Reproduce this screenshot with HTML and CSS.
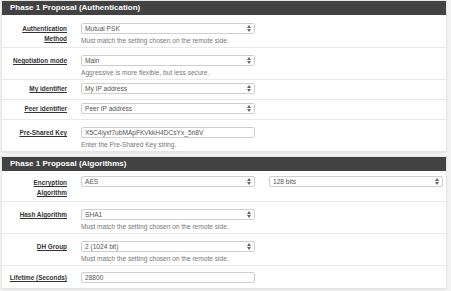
FILE: index.html
```html
<!DOCTYPE html>
<html lang="en">
<head>
    <meta charset="UTF-8">
    <title>IPsec Phase 1</title>
    <link rel="stylesheet" href="styles.css">
</head>
<body>
    <!-- Phase 1: Authentication -->
    <div class="panel">
        <div class="panel-heading">Phase 1 Proposal (Authentication)</div>

        <div class="row has-hint">
            <div class="label"><span>Authentication Method</span></div>
            <div class="field">
                <div class="select"><span>Mutual PSK</span><svg class="arrows" width="4" height="7" viewBox="0 0 4 7"><path d="M0 3L2 0L4 3Z M0 4L2 7L4 4Z"/></svg></div>
                <div class="hint">Must match the setting chosen on the remote side.</div>
            </div>
        </div>

        <div class="row has-hint">
            <div class="label"><span>Negotiation mode</span></div>
            <div class="field">
                <div class="select"><span>Main</span><svg class="arrows" width="4" height="7" viewBox="0 0 4 7"><path d="M0 3L2 0L4 3Z M0 4L2 7L4 4Z"/></svg></div>
                <div class="hint">Aggressive is more flexible, but less secure.</div>
            </div>
        </div>

        <div class="row">
            <div class="label"><span>My identifier</span></div>
            <div class="field">
                <div class="select"><span>My IP address</span><svg class="arrows" width="4" height="7" viewBox="0 0 4 7"><path d="M0 3L2 0L4 3Z M0 4L2 7L4 4Z"/></svg></div>
            </div>
        </div>

        <div class="row">
            <div class="label"><span>Peer identifier</span></div>
            <div class="field">
                <div class="select"><span>Peer IP address</span><svg class="arrows" width="4" height="7" viewBox="0 0 4 7"><path d="M0 3L2 0L4 3Z M0 4L2 7L4 4Z"/></svg></div>
            </div>
        </div>

        <div class="row has-hint">
            <div class="label"><span>Pre-Shared Key</span></div>
            <div class="field">
                <div class="input">X5C4iyxf7ubMApFKVkkH4DCsYx_5n8V</div>
                <div class="hint">Enter the Pre-Shared Key string.</div>
            </div>
        </div>
    </div>

    <!-- Phase 1: Algorithms -->
    <div class="panel">
        <div class="panel-heading">Phase 1 Proposal (Algorithms)</div>

        <div class="row two-line">
            <div class="label"><span>Encryption Algorithm</span></div>
            <div class="field">
                <div class="select"><span>AES</span><svg class="arrows" width="4" height="7" viewBox="0 0 4 7"><path d="M0 3L2 0L4 3Z M0 4L2 7L4 4Z"/></svg></div>
            </div>
            <div class="field field-extra">
                <div class="select"><span>128 bits</span><svg class="arrows" width="4" height="7" viewBox="0 0 4 7"><path d="M0 3L2 0L4 3Z M0 4L2 7L4 4Z"/></svg></div>
            </div>
        </div>

        <div class="row has-hint">
            <div class="label"><span>Hash Algorithm</span></div>
            <div class="field">
                <div class="select"><span>SHA1</span><svg class="arrows" width="4" height="7" viewBox="0 0 4 7"><path d="M0 3L2 0L4 3Z M0 4L2 7L4 4Z"/></svg></div>
                <div class="hint">Must match the setting chosen on the remote side.</div>
            </div>
        </div>

        <div class="row has-hint">
            <div class="label"><span>DH Group</span></div>
            <div class="field">
                <div class="select"><span>2 (1024 bit)</span><svg class="arrows" width="4" height="7" viewBox="0 0 4 7"><path d="M0 3L2 0L4 3Z M0 4L2 7L4 4Z"/></svg></div>
                <div class="hint">Must match the setting chosen on the remote side.</div>
            </div>
        </div>

        <div class="row row-last">
            <div class="label"><span>Lifetime (Seconds)</span></div>
            <div class="field">
                <div class="input">28800</div>
            </div>
        </div>
    </div>
</body>
</html>
```

FILE: styles.css
```css
* {
    box-sizing: border-box;
    margin: 0;
    padding: 0;
}

body {
    background: #f4f4f4;
    padding: 1px 5px 0 2px;
    font-family: 'Liberation Sans', Arial, sans-serif;
}

/* Panels */
.panel {
    background: #fff;
    box-shadow: 0 0 0 1px #e4e4e4, 0 2px 3px rgba(0, 0, 0, 0.08);
    margin-bottom: 6px;
}

.panel-heading {
    background: #424242;
    color: #fff;
    font-weight: bold;
    font-size: 8px;
    height: 14px;
    line-height: 14px;
    padding-left: 8px;
}

/* Form rows */
.row {
    display: flex;
    align-items: flex-start;
    border-top: 1px solid #e9e9e9;
    padding: 3px 0 5px;
}

.panel-heading + .row {
    border-top-color: transparent;
}

.row.has-hint {
    padding: 7px 0 1px;
}

.row.two-line {
    padding: 4px 0 3px;
}

.row.row-last {
    padding: 6px 0 5px;
}

.label {
    width: 59px;
    margin-left: 6px;
    text-align: right;
    font-weight: bold;
    font-size: 6.4px;
    line-height: 10px;
    color: #333;
    padding-top: 1px;
}

.two-line .label {
    padding-top: 2px;
}

.label span {
    text-decoration: underline;
}

.field {
    width: 174px;
    margin-left: 14px;
}

.field-extra {
    margin-left: 14px;
}

.select,
.input {
    height: 11px;
    border: 1px solid #cfcfcf;
    border-radius: 2px;
    padding: 0 3px;
    font-size: 6.6px;
    color: #555;
    display: flex;
    align-items: center;
    justify-content: space-between;
    white-space: nowrap;
}

.arrows {
    fill: #666;
}

.hint {
    font-size: 6.6px;
    line-height: 10px;
    margin-top: 2px;
    color: #777;
}
```
